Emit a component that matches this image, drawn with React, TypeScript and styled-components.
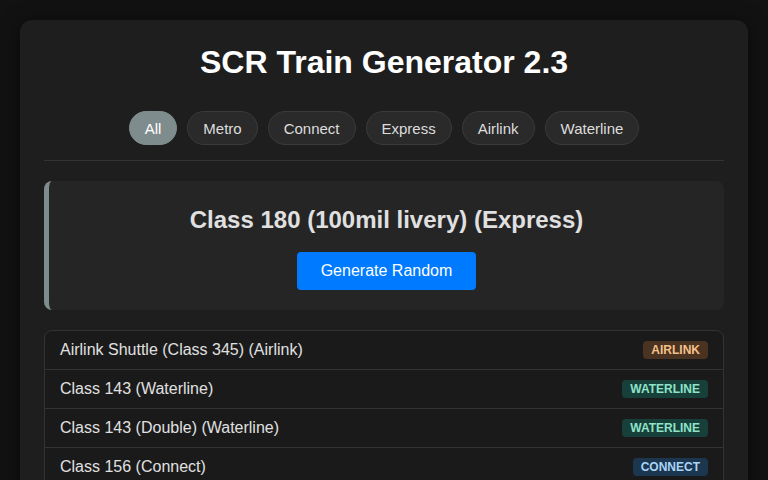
import React from 'react';
import styled, { createGlobalStyle } from 'styled-components';

const GlobalStyle = createGlobalStyle`
  * { box-sizing: border-box; }
  body {
    margin: 0;
    padding: 20px;
    background: #121212;
    color: #e0e0e0;
    font-family: 'Liberation Sans', Arial, sans-serif;
  }
`;

const Container = styled.div`
  background: #1e1e1e;
  border-radius: 12px;
  padding: 24px;
  box-shadow: 0 4px 20px rgba(0,0,0,0.5);
`;

const Title = styled.h1`
  margin: 0 0 30px 0;
  font-size: 32px;
  line-height: 37px;
  font-weight: 700;
  color: #ffffff;
  text-align: center;
`;

const FilterBar = styled.div`
  display: flex;
  justify-content: center;
  gap: 10px;
  padding-bottom: 15px;
  border-bottom: 1px solid #333;
  margin-bottom: 20px;
`;

const FilterButton = styled.button<{ $active: boolean }>`
  height: 34px;
  padding: 0 15px;
  border-radius: 17px;
  border: 1px solid ${p => (p.$active ? '#7f8c8d' : '#3a3a3a')};
  background: ${p => (p.$active ? '#7f8c8d' : '#2a2a2a')};
  color: ${p => (p.$active ? '#ffffff' : '#dddddd')};
  font-family: inherit;
  font-size: 15px;
  cursor: pointer;
`;

const ResultCard = styled.div`
  background: #252525;
  border-left: 5px solid #7f8c8d;
  border-radius: 8px;
  padding: 24px 20px 20px;
  text-align: center;
  margin-bottom: 20px;
`;

const ResultTitle = styled.h2`
  margin: 0 0 18px 0;
  font-size: 24px;
  line-height: 29px;
  font-weight: 700;
  color: #e0e0e0;
`;

const GenerateButton = styled.button`
  height: 38px;
  padding: 0 24px;
  border: none;
  border-radius: 4px;
  background: #007bff;
  color: #ffffff;
  font-family: inherit;
  font-size: 16px;
  cursor: pointer;
`;

const List = styled.div`
  border: 1px solid #333;
  border-radius: 8px;
  background: #1a1a1a;
  overflow: hidden;
`;

const Row = styled.div`
  display: flex;
  align-items: center;
  justify-content: space-between;
  padding: 10px 15px;
  border-bottom: 1px solid #333;
  font-size: 16px;
  line-height: 18px;
  color: #e0e0e0;
`;

const badgeColors: Record<string, { bg: string; fg: string }> = {
  airlink: { bg: '#4a3320', fg: '#f5c08a' },
  waterline: { bg: '#17403a', fg: '#8fe3c8' },
  connect: { bg: '#1c3650', fg: '#a8d4f5' },
  express: { bg: '#4a2020', fg: '#f5a0a0' },
  metro: { bg: '#3a2a4a', fg: '#d0b0f0' },
};

const Badge = styled.span<{ $type: string }>`
  background: ${p => badgeColors[p.$type].bg};
  color: ${p => badgeColors[p.$type].fg};
  font-size: 12px;
  line-height: 14px;
  font-weight: 700;
  padding: 2px 8px;
  border-radius: 4px;
  text-transform: uppercase;
`;

const filters = ['All', 'Metro', 'Connect', 'Express', 'Airlink', 'Waterline'];

const trains = [
  { name: 'Airlink Shuttle (Class 345) (Airlink)', type: 'airlink' },
  { name: 'Class 143 (Waterline)', type: 'waterline' },
  { name: 'Class 143 (Double) (Waterline)', type: 'waterline' },
  { name: 'Class 156 (Connect)', type: 'connect' },
  { name: 'Class 158 (Connect)', type: 'connect' },
];

export default function App() {
  const [active, setActive] = React.useState('All');
  return (
    <>
      <GlobalStyle />
      <Container>
        <Title>SCR Train Generator 2.3</Title>
        <FilterBar>
          {filters.map(f => (
            <FilterButton key={f} $active={active === f} onClick={() => setActive(f)}>
              {f}
            </FilterButton>
          ))}
        </FilterBar>
        <ResultCard>
          <ResultTitle>Class 180 (100mil livery) (Express)</ResultTitle>
          <GenerateButton>Generate Random</GenerateButton>
        </ResultCard>
        <List>
          {trains.map(t => (
            <Row key={t.name}>
              {t.name}
              <Badge $type={t.type}>{t.type}</Badge>
            </Row>
          ))}
        </List>
      </Container>
    </>
  );
}
